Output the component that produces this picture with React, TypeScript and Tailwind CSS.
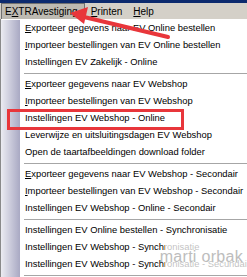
import React from 'react';

type Entry = { label: string; key?: number } | 'sep';

// menu entries; key = index of the underlined access letter
const ENTRIES: Entry[] = [
  { label: 'Exporteer gegevens naar EV Online bestellen', key: 0 },
  { label: 'Importeer bestellingen van EV Online bestellen', key: 0 },
  { label: 'Instellingen EV Zakelijk - Online' },
  'sep',
  { label: 'Exporteer gegevens naar EV Webshop', key: 0 },
  { label: 'Importeer bestellingen van EV Webshop', key: 0 },
  { label: 'Instellingen EV Webshop - Online' },
  { label: 'Leverwijze en uitsluitingsdagen EV Webshop' },
  { label: 'Open de taartafbeeldingen download folder' },
  'sep',
  { label: 'Exporteer gegevens naar EV Webshop - Secondair', key: 0 },
  { label: 'Importeer bestellingen van EV Webshop - Secondair', key: 0 },
  { label: 'Instellingen EV Webshop - Online - Secondair' },
  'sep',
  { label: 'Instellingen EV Online bestellen - Synchronisatie' },
  { label: 'Instellingen EV Webshop - Synchronisatie' },
  { label: 'Instellingen EV Webshop - Synchronisatie - Secundair' },
  'sep',
];

const Label = ({ text, at }: { text: string; at?: number }) => {
  if (at === undefined) return <>{text}</>;
  return (
    <>
      {text.slice(0, at)}
      <span className="underline underline-offset-[1px]">{text[at]}</span>
      {text.slice(at + 1)}
    </>
  );
};

const MenuRow = ({ entry }: { entry: Entry }) => {
  if (entry === 'sep') {
    return (
      <div className="flex h-[5px]">
        <div className="w-[19px] bg-gradient-to-r from-[#ececf2] to-[#a9a9c3]" />
        <div className="flex-1 flex items-center pl-[4px]">
          <div className="h-px w-full bg-[#a6a6a6]" />
        </div>
      </div>
    );
  }
  return (
    <div className="flex h-[17px]">
      <div className="w-[19px] bg-gradient-to-r from-[#ececf2] to-[#a9a9c3]" />
      <div className="flex-1 flex items-center pl-[5px] whitespace-nowrap text-[9.4px] text-black">
        <Label text={entry.label} at={entry.key} />
      </div>
    </div>
  );
};

export default function App() {
  return (
    <div className="relative w-[247px] h-[277px] overflow-hidden bg-[#d4d0c8] font-['Liberation_Sans',Arial,sans-serif]">
      <div className="h-[3px] bg-[#0c2a6e]" />
      <div className="flex h-[274px]">
        {/* window frame */}
        <div className="w-[3px] bg-[#3d5c8d]" />
        <div className="flex-1 flex flex-col">
          {/* menu bar */}
          <div className="flex h-[17px] items-center text-[10px] text-black">
            <div className="ml-[1px] h-[16px] pl-[3px] pr-[6px] flex items-center bg-[#bdbab2] border border-[#707070] border-b-0">
              E<span className="underline">X</span>TRAvestiging
            </div>
            <div className="ml-[4px] px-[2px]">
              <span className="underline">P</span>rinten
            </div>
            <div className="ml-[7px] px-[2px]">
              <span className="underline">H</span>elp
            </div>
          </div>
          {/* dropdown */}
          <div className="flex-1 mr-[2px] border-l border-r border-[#8a8a8a] bg-white pt-[1px]">
            {ENTRIES.map((e, i) => (
              <MenuRow key={i} entry={e} />
            ))}
          </div>
        </div>
      </div>

      {/* annotation: red box */}
      <div className="absolute left-[7px] top-[109px] w-[177px] h-[21px] border-[3px] border-[#e8363b]" />

      {/* annotation: arrow */}
      <svg className="absolute left-0 top-0" width="247" height="60" viewBox="0 0 247 60">
        <line x1="168" y1="37" x2="84" y2="17" stroke="#e8363b" strokeWidth="4" strokeLinecap="round" />
        <polygon points="70,13 88,7 84,24" fill="#e8363b" />
      </svg>

      {/* watermark */}
      <div className="absolute left-[165px] top-[241px] w-[82px] h-[31px] bg-white/75 flex items-center justify-end pr-[4px] whitespace-nowrap">
        <span className="text-[16px] leading-none tracking-[0.3px] text-[#bdbdbd] font-['Liberation_Sans',sans-serif]">
          marti orbak
        </span>
      </div>
    </div>
  );
}
